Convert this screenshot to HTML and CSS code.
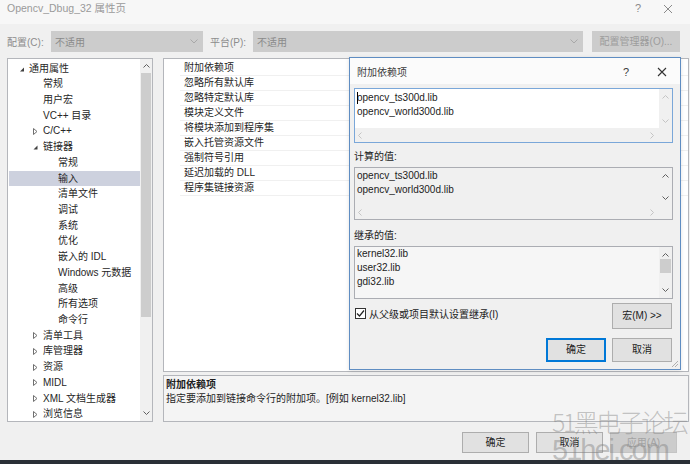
FILE: index.html
```html
<!DOCTYPE html>
<html lang="zh-CN">
<head>
    <meta charset="UTF-8">
    <meta name="viewport" content="width=device-width, initial-scale=1.0">
    <title>Opencv_Dbug_32 属性页</title>
    <link rel="stylesheet" href="styles.css">
</head>
<body>

    <div class="window">
        <div class="titlebar">
            <span class="title">Opencv_Dbug_32 属性页</span>
            <span class="title-help">?</span>
            <svg class="title-close" width="10" height="10" viewBox="0 0 10 10"><path d="M1 1L9 9M9 1L1 9" stroke="#8a8a8a" stroke-width="1"/></svg>
        </div>

        <div class="config-row">
            <span class="cfg-label cfg-label-1">配置(C):</span>
            <div class="combo combo-1">
                <span>不适用</span>
                <svg width="8" height="5" viewBox="0 0 8 5"><path d="M0.5 0.5L4 4L7.5 0.5" fill="none" stroke="#a8a8a8"/></svg>
            </div>
            <span class="cfg-label cfg-label-2">平台(P):</span>
            <div class="combo combo-2">
                <span>不适用</span>
                <svg width="8" height="5" viewBox="0 0 8 5"><path d="M0.5 0.5L4 4L7.5 0.5" fill="none" stroke="#a8a8a8"/></svg>
            </div>
            <div class="cfg-btn">配置管理器(O)...</div>
        </div>

        <div class="main">
            <div class="tree">
                <div class="tree-rows">
                    <div class="node lvl0 has-exp"><svg class="exp" width="11" height="9" viewBox="0 0 11 9"><path d="M2 7.5L6 3.5V7.5Z" fill="#404040"/></svg>通用属性</div>
                    <div class="node lvl1">常规</div>
                    <div class="node lvl1">用户宏</div>
                    <div class="node lvl1">VC++ 目录</div>
                    <div class="node lvl1 has-exp"><svg class="exp" width="11" height="9" viewBox="0 0 11 9"><path d="M1.5 1.5L5 4.5L1.5 7.5Z" fill="none" stroke="#707070"/></svg>C/C++</div>
                    <div class="node lvl1 has-exp"><svg class="exp" width="11" height="9" viewBox="0 0 11 9"><path d="M1.5 7.5L5.5 3.5V7.5Z" fill="#404040"/></svg>链接器</div>
                    <div class="node lvl2">常规</div>
                    <div class="node lvl2 selected">输入</div>
                    <div class="node lvl2">清单文件</div>
                    <div class="node lvl2">调试</div>
                    <div class="node lvl2">系统</div>
                    <div class="node lvl2">优化</div>
                    <div class="node lvl2">嵌入的 IDL</div>
                    <div class="node lvl2">Windows 元数据</div>
                    <div class="node lvl2">高级</div>
                    <div class="node lvl2">所有选项</div>
                    <div class="node lvl2">命令行</div>
                    <div class="node lvl1 has-exp"><svg class="exp" width="11" height="9" viewBox="0 0 11 9"><path d="M1.5 1.5L5 4.5L1.5 7.5Z" fill="none" stroke="#707070"/></svg>清单工具</div>
                    <div class="node lvl1 has-exp"><svg class="exp" width="11" height="9" viewBox="0 0 11 9"><path d="M1.5 1.5L5 4.5L1.5 7.5Z" fill="none" stroke="#707070"/></svg>库管理器</div>
                    <div class="node lvl1 has-exp"><svg class="exp" width="11" height="9" viewBox="0 0 11 9"><path d="M1.5 1.5L5 4.5L1.5 7.5Z" fill="none" stroke="#707070"/></svg>资源</div>
                    <div class="node lvl1 has-exp"><svg class="exp" width="11" height="9" viewBox="0 0 11 9"><path d="M1.5 1.5L5 4.5L1.5 7.5Z" fill="none" stroke="#707070"/></svg>MIDL</div>
                    <div class="node lvl1 has-exp"><svg class="exp" width="11" height="9" viewBox="0 0 11 9"><path d="M1.5 1.5L5 4.5L1.5 7.5Z" fill="none" stroke="#707070"/></svg>XML 文档生成器</div>
                    <div class="node lvl1 has-exp"><svg class="exp" width="11" height="9" viewBox="0 0 11 9"><path d="M1.5 1.5L5 4.5L1.5 7.5Z" fill="none" stroke="#707070"/></svg>浏览信息</div>
                </div>
                <div class="vscroll">
                    <div class="sb-btn sb-up"><svg width="7" height="4" viewBox="0 0 7 4"><path d="M0.5 3.5L3.5 0.5L6.5 3.5" fill="none" stroke="#606060"/></svg></div>
                    <div class="sb-thumb"></div>
                    <div class="sb-track"></div>
                    <div class="sb-btn sb-down"><svg width="7" height="4" viewBox="0 0 7 4"><path d="M0.5 0.5L3.5 3.5L6.5 0.5" fill="none" stroke="#606060"/></svg></div>
                </div>
            </div>

            <div class="right">
                <div class="grid">
                    <div class="prop-row">附加依赖项</div>
                    <div class="prop-row">忽略所有默认库</div>
                    <div class="prop-row">忽略特定默认库</div>
                    <div class="prop-row">模块定义文件</div>
                    <div class="prop-row">将模块添加到程序集</div>
                    <div class="prop-row">嵌入托管资源文件</div>
                    <div class="prop-row">强制符号引用</div>
                    <div class="prop-row">延迟加载的 DLL</div>
                    <div class="prop-row">程序集链接资源</div>
                </div>
                <div class="desc">
                    <div class="desc-title">附加依赖项</div>
                    <div>指定要添加到链接命令行的附加项。[例如 kernel32.lib]</div>
                </div>
            </div>
        </div>

        <div class="footer">
            <div class="btn">确定</div>
            <div class="btn">取消</div>
            <div class="btn btn-disabled">应用(A)</div>
        </div>
        <div class="taskbar"></div>

        <div class="dialog">
            <div class="dlg-titlebar">
                <span class="dlg-title">附加依赖项</span>
                <span class="dlg-help">?</span>
                <svg class="dlg-close" width="10" height="10" viewBox="0 0 10 10"><path d="M1 1L9 9M9 1L1 9" stroke="#333" stroke-width="1.1"/></svg>
            </div>
            <div class="dlg-body">
                <div class="tbox tbox-edit">
                    <div class="tbox-text tbox-text-1"><span class="caret"></span>opencv_ts300d.lib<br>opencv_world300d.lib</div>
                    <div class="sb-v">
                        <svg width="7" height="4" viewBox="0 0 7 4"><path d="M0.5 3.5L3.5 0.5L6.5 3.5" fill="none" stroke="#c4c4c4"/></svg>
                        <svg width="7" height="4" viewBox="0 0 7 4"><path d="M0.5 0.5L3.5 3.5L6.5 0.5" fill="none" stroke="#c4c4c4"/></svg>
                    </div>
                    <div class="sb-h">
                        <svg width="4" height="7" viewBox="0 0 4 7"><path d="M3.5 0.5L0.5 3.5L3.5 6.5" fill="none" stroke="#c4c4c4"/></svg>
                        <svg width="4" height="7" viewBox="0 0 4 7"><path d="M0.5 0.5L3.5 3.5L0.5 6.5" fill="none" stroke="#c4c4c4"/></svg>
                    </div>
                    <div class="sb-corner"></div>
                </div>

                <div class="dlg-label">计算的值:</div>
                <div class="tbox tbox-ro">
                    <div class="tbox-text tbox-text-2">opencv_ts300d.lib<br>opencv_world300d.lib</div>
                    <div class="sb-v">
                        <svg width="7" height="4" viewBox="0 0 7 4"><path d="M0.5 3.5L3.5 0.5L6.5 3.5" fill="none" stroke="#606060"/></svg>
                        <svg width="7" height="4" viewBox="0 0 7 4"><path d="M0.5 0.5L3.5 3.5L6.5 0.5" fill="none" stroke="#606060"/></svg>
                    </div>
                    <div class="sb-h">
                        <svg width="4" height="7" viewBox="0 0 4 7"><path d="M3.5 0.5L0.5 3.5L3.5 6.5" fill="none" stroke="#c4c4c4"/></svg>
                        <svg width="4" height="7" viewBox="0 0 4 7"><path d="M0.5 0.5L3.5 3.5L0.5 6.5" fill="none" stroke="#c4c4c4"/></svg>
                    </div>
                    <div class="sb-corner"></div>
                </div>

                <div class="dlg-label dlg-label-2">继承的值:</div>
                <div class="tbox tbox-ro tbox-noh">
                    <div class="tbox-text tbox-text-3">kernel32.lib<br>user32.lib<br>gdi32.lib</div>
                    <div class="sb-v sb-v-thumb">
                        <svg width="7" height="4" viewBox="0 0 7 4"><path d="M0.5 3.5L3.5 0.5L6.5 3.5" fill="none" stroke="#606060"/></svg>
                        <div class="sb-v-bar"></div>
                        <svg width="7" height="4" viewBox="0 0 7 4"><path d="M0.5 0.5L3.5 3.5L6.5 0.5" fill="none" stroke="#606060"/></svg>
                    </div>
                </div>

                <div class="inherit-row">
                    <label class="check">
                        <span class="check-box"><svg width="9" height="9" viewBox="0 0 9 9"><path d="M1 4.5L3.5 7L8 1.5" fill="none" stroke="#222" stroke-width="1.2"/></svg></span>
                        从父级或项目默认设置继承(I)
                    </label>
                    <div class="dlg-btn dlg-btn-tall">宏(M) &gt;&gt;</div>
                </div>

                <div class="dlg-buttons">
                    <div class="dlg-btn dlg-btn-default">确定</div>
                    <div class="dlg-btn">取消</div>
                </div>
            </div>
            <svg class="grip" width="9" height="9" viewBox="0 0 9 9"><path d="M8 2L2 8M8 5L5 8" stroke="#b0b0b0" stroke-width="1"/></svg>
        </div>

        <div class="watermark">
            <div class="wm-cn">51黑电子论坛</div>
            <div class="wm-en">51hei.com</div>
        </div>
    </div>

</body>
</html>
```

FILE: styles.css
```css
body {
    margin: 0;
    padding: 0;
    font-family: "Liberation Sans", "Noto Sans CJK SC", sans-serif;
    font-size: 10px;
    color: #1e1e1e;
}
.window {
    position: relative;
    width: 690px;
    height: 464px;
    overflow: hidden;
    background: #f0f0f0;
    display: flex;
    flex-direction: column;
}
.titlebar {
    height: 24px;
    display: flex;
    align-items: flex-start;
    padding: 2px 0 0 7px;
    box-sizing: border-box;
    background: #f7f7f7;
    color: #9a9a9a;
    line-height: 13px;
}
.title {
    font-size: 10.5px;
}
.title-help {
    margin-left: auto;
    margin-right: 22px;
    font-size: 11px;
    color: #8a8a8a;
}
.title-close {
    margin: 2px 17px 0 0;
}
.config-row {
    display: flex;
    align-items: center;
    height: 21px;
    margin: 7px 0 6px;
    padding-left: 7px;
    color: #8c8c8c;
}
.cfg-label-1 {
    width: 44px;
}
.cfg-label-2 {
    width: 43px;
    margin-left: 7px;
}
.combo {
    height: 21px;
    box-sizing: border-box;
    background: #cccccc;
    display: flex;
    align-items: center;
    justify-content: space-between;
    padding: 0 5px 0 4px;
    color: #8a8a8a;
}
.combo-1 {
    width: 152px;
}
.combo-2 {
    width: 330px;
}
.cfg-btn {
    width: 88px;
    height: 21px;
    margin-left: 9px;
    background: #cccccc;
    color: #9c9c9c;
    line-height: 21px;
    text-align: center;
}
.main {
    display: flex;
    height: 364px;
    padding-left: 7px;
    gap: 10px;
}
.tree {
    width: 146px;
    box-sizing: border-box;
    border: 1px solid #b4b6bb;
    background: white;
    display: flex;
}
.tree-rows {
    flex: 1;
    padding-top: 1.5px;
}
.node {
    height: 15.73px;
    line-height: 15.73px;
    display: flex;
    align-items: center;
    white-space: nowrap;
    color: #262626;
}
.lvl0.has-exp {
    padding-left: 10px;
}
.lvl1 {
    padding-left: 35px;
}
.lvl1.has-exp {
    padding-left: 24px;
}
.lvl2 {
    padding-left: 50px;
}
.exp {
    flex: none;
}
.selected {
    background: #cdd1de;
    margin-left: 1px;
    padding-left: 49px;
}
.vscroll {
    width: 12px;
    background: #f0f0f0;
    display: flex;
    flex-direction: column;
}
.sb-btn {
    display: flex;
    align-items: center;
    justify-content: center;
}
.sb-up {
    height: 14px;
}
.sb-down {
    height: 16px;
}
.sb-thumb {
    height: 244px;
    margin: 0 1px;
    background: #cdcdcd;
}
.sb-track {
    flex: 1;
}
.right {
    flex: 1;
    display: flex;
    flex-direction: column;
    gap: 3px;
    padding-right: 1px;
}
.grid {
    height: 314px;
    box-sizing: border-box;
    border: 1px solid #b4b6bb;
    background: white;
    padding-top: 2px;
}
.prop-row {
    height: 15px;
    line-height: 14px;
    box-sizing: border-box;
    margin-left: 16px;
    padding-left: 4px;
    border-bottom: 1px solid #f0f0f0;
    color: #262626;
}
.desc {
    flex: 1;
    box-sizing: border-box;
    border: 1px solid #b4b6bb;
    background: #f4f4f4;
    padding: 2px 0 0 2px;
    line-height: 14px;
}
.desc-title {
    font-weight: bold;
}
.footer {
    display: flex;
    justify-content: flex-end;
    gap: 7px;
    height: 21px;
    margin: 10px 0 7px;
    padding-right: 13px;
}
.btn {
    width: 67px;
    box-sizing: border-box;
    border: 1px solid #adadad;
    background: #e1e1e1;
    text-align: center;
    line-height: 19px;
}
.btn-disabled {
    background: #cccccc;
    border-color: #c4c4c4;
    color: #a3a3a3;
}
.taskbar {
    height: 4px;
    background: #2a2f36;
}
.dialog {
    position: absolute;
    left: 349px;
    top: 57px;
    width: 332px;
    height: 313px;
    box-sizing: border-box;
    border: 1px solid #5f8dc2;
    background: #f0f0f0;
    box-shadow: 0 1px 4px rgba(0, 0, 0, 0.12);
    display: flex;
    flex-direction: column;
}
.dlg-titlebar {
    height: 26px;
    background: #fbfbfb;
    display: flex;
    align-items: center;
    padding-left: 7px;
    padding-top: 1px;
    box-sizing: border-box;
    color: #3c3c3c;
}
.dlg-help {
    margin-left: auto;
    margin-right: 28px;
    font-size: 11px;
}
.dlg-close {
    margin-right: 13px;
}
.dlg-body {
    padding: 4px 7px 0 4px;
    display: flex;
    flex-direction: column;
}
.tbox {
    height: 55px;
    box-sizing: border-box;
    border: 1px solid #abadb3;
    display: grid;
    grid-template-columns: 1fr 13px;
    grid-template-rows: 1fr 14px;
}
.tbox-edit {
    border-color: #7aa7d9;
    background: white;
}
.tbox-ro {
    height: 53px;
    background: #f0f0f0;
}
.tbox-noh {
    grid-template-rows: 1fr;
    background: #f6f6f6;
}
.tbox-text {
    padding-left: 2px;
    line-height: 14px;
    color: #222;
    position: relative;
}
.tbox-text-1 {
    padding-top: 2px;
}
.tbox-text-2 {
    padding-top: 1px;
}
.caret {
    position: absolute;
    left: 2px;
    top: 3px;
    width: 1px;
    height: 12px;
    background: #000;
}
.sb-v {
    background: #f0f0f0;
    display: flex;
    flex-direction: column;
    align-items: center;
    justify-content: space-between;
    padding: 6px 0 5px;
}
.sb-v-thumb {
    padding: 6px 0 6px;
}
.sb-v-bar {
    width: 11px;
    height: 14px;
    margin-top: 2px;
    background: #cdcdcd;
    flex: none;
}
.sb-v-thumb svg:last-child {
    margin-top: auto;
}
.sb-h {
    background: #f0f0f0;
    display: flex;
    align-items: center;
    justify-content: space-between;
    padding: 0 5px 0 3px;
}
.sb-corner {
    background: #f0f0f0;
}
.dlg-label {
    line-height: 14px;
    margin: 7px 0 3px;
    color: #222;
}
.dlg-label-2 {
    margin-top: 9px;
}
.inherit-row {
    display: flex;
    justify-content: space-between;
    align-items: center;
    margin-top: 4px;
    height: 26px;
}
.check {
    display: flex;
    align-items: center;
    gap: 3px;
    margin-left: 1px;
    margin-top: -6px;
    color: #222;
}
.check-box {
    width: 11px;
    height: 11px;
    box-sizing: border-box;
    border: 1px solid #333;
    background: white;
    display: flex;
    align-items: center;
    justify-content: center;
}
.dlg-btn {
    width: 60px;
    height: 24px;
    box-sizing: border-box;
    border: 1px solid #adadad;
    background: #e1e1e1;
    text-align: center;
    line-height: 22px;
    margin-right: 1px;
    color: #222;
}
.dlg-btn-tall {
    height: 26px;
    line-height: 24px;
}
.dlg-btn-default {
    border-color: #0078d7;
    box-shadow: inset 0 0 0 1px #0078d7;
}
.dlg-buttons {
    display: flex;
    justify-content: flex-end;
    gap: 5px;
    margin-top: 9px;
}
.grip {
    position: absolute;
    right: 1px;
    bottom: 1px;
}
.watermark {
    position: absolute;
    left: 552px;
    top: 406px;
    color: rgba(130, 130, 130, 0.45);
    pointer-events: none;
}
.wm-cn {
    font-family: "Noto Sans CJK SC", sans-serif;
    font-weight: 300;
    font-size: 25px;
    line-height: 30px;
    letter-spacing: -2.5px;
    white-space: nowrap;
}
.wm-en {
    font-family: "Liberation Sans", sans-serif;
    font-size: 29px;
    line-height: 28px;
    letter-spacing: -2px;
    white-space: nowrap;
}
```
